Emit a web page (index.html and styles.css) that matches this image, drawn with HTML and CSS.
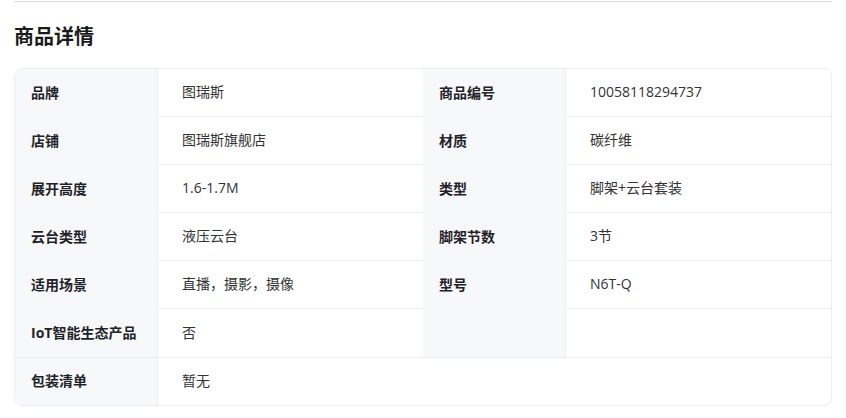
FILE: index.html
```html
<!DOCTYPE html>
<html lang="zh-CN">
<head>
<meta charset="utf-8">
<link rel="stylesheet" href="styles.css">
</head>
<body>
<div class="page">
  <div class="topline"></div>
  <h2 class="title">商品详情</h2>
  <div class="specs">
    <div class="lab">品牌</div><div class="val">图瑞斯</div>
    <div class="lab">商品编号</div><div class="val">10058118294737</div>
    <div class="lab">店铺</div><div class="val">图瑞斯旗舰店</div>
    <div class="lab">材质</div><div class="val">碳纤维</div>
    <div class="lab">展开高度</div><div class="val">1.6-1.7M</div>
    <div class="lab">类型</div><div class="val">脚架+云台套装</div>
    <div class="lab">云台类型</div><div class="val">液压云台</div>
    <div class="lab">脚架节数</div><div class="val">3节</div>
    <div class="lab">适用场景</div><div class="val">直播，摄影，摄像</div>
    <div class="lab">型号</div><div class="val">N6T-Q</div>
    <div class="lab">IoT智能生态产品</div><div class="val noline">否</div>
    <div class="lab"></div><div class="val noline"></div>
    <div class="lab last">包装清单</div><div class="val last wide">暂无</div>
  </div>
</div>
</body>
</html>
```
FILE: styles.css
```css
* { box-sizing: border-box; }
body {
  margin: 0;
  background: #fff;
  font-family: "Open Sans", "Noto Sans CJK SC", sans-serif;
  color: #1f2329;
}
.page {
  padding: 1px 14px 0 14px;
}
.topline {
  height: 1px;
  background: #dcdcdc;
}
.title {
  margin: 0;
  padding: 20px 0 0 0;
  height: 66px;
  font-family: "Noto Sans CJK SC", sans-serif;
  font-size: 20px;
  font-weight: 700;
  line-height: 28px;
  color: #1a1a1a;
}
.specs {
  display: grid;
  grid-template-columns: 143px 1fr 143px 1fr;
  border: 1px solid #eceef1;
  border-radius: 8px;
  overflow: hidden;
}
.lab {
  height: 48px;
  display: flex;
  align-items: center;
  padding: 0 0 3px 16px;
  background: #f7f8fa;
  border-right: 1px solid #eceef1;
  font-size: 14px;
  font-weight: 700;
  color: #1f2329;
}
.val {
  height: 48px;
  display: flex;
  align-items: center;
  padding: 0 0 3px 24px;
  border-bottom: 1px solid #eceef1;
  font-size: 14px;
  color: #333;
}
.val.noline { border-bottom: none; }
.last {
  border-top: 1px solid #eceef1;
  border-bottom: none;
  height: 48px;
}
.wide { grid-column: 2 / 5; }
```
